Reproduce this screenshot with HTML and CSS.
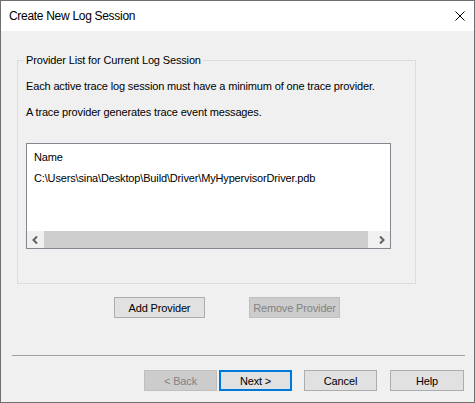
FILE: index.html
```html
<!DOCTYPE html>
<html>
<head>
<meta charset="utf-8">
<title>Create New Log Session</title>
<link rel="stylesheet" href="styles.css">
</head>
<body>
<div class="window">
  <div class="titlebar">
    <span class="title">Create New Log Session</span>
    <svg class="close" width="10" height="10" viewBox="0 0 10 10"><path d="M0.5 0.5 L9.5 9.5 M9.5 0.5 L0.5 9.5" stroke="#000" stroke-width="1" fill="none"/></svg>
  </div>
  <div class="body">
    <fieldset class="group">
      <legend class="legend">Provider List for Current Log Session</legend>
      <p class="desc">Each active trace log session must have a minimum of one trace provider.</p>
      <p class="desc">A trace provider generates trace event messages.</p>
      <div class="listbox">
        <div class="list-items">
          <div class="item">Name</div>
          <div class="item">C:\Users\sina\Desktop\Build\Driver\MyHypervisorDriver.pdb</div>
        </div>
        <div class="hscroll">
          <div class="arrow"><svg width="7" height="8" viewBox="0 0 7 8"><path d="M5 0.5 L1.5 4 L5 7.5" stroke="#606060" stroke-width="2" fill="none"/></svg></div>
          <div class="thumb"></div>
          <div class="track"></div>
          <div class="arrow"><svg width="7" height="8" viewBox="0 0 7 8"><path d="M2 0.5 L5.5 4 L2 7.5" stroke="#606060" stroke-width="2" fill="none"/></svg></div>
        </div>
      </div>
    </fieldset>
    <div class="provider-buttons">
      <button class="btn btn-wide">Add Provider</button>
      <button class="btn btn-wide" disabled>Remove Provider</button>
    </div>
    <div class="separator"></div>
    <div class="wizard-buttons">
      <button class="btn btn-back" disabled>&lt; Back</button>
      <button class="btn btn-next">Next &gt;</button>
      <button class="btn btn-cancel">Cancel</button>
      <button class="btn btn-help">Help</button>
    </div>
  </div>
</div>
</body>
</html>
```
FILE: styles.css
```css
html, body {
  margin: 0;
  padding: 0;
  background: #f0f0f0;
}
.window {
  box-sizing: border-box;
  width: 475px;
  height: 403px;
  border: 1px solid #6f6f6f;
  background: #f0f0f0;
  display: flex;
  flex-direction: column;
  font-family: "Liberation Sans", Arial, sans-serif;
  font-size: 11px;
  letter-spacing: -0.15px;
  color: #000;
}
.titlebar {
  height: 30px;
  flex: none;
  background: #fff;
  display: flex;
  align-items: center;
  justify-content: space-between;
  padding: 0 9px 0 8px;
}
.title {
  font-size: 12px;
  letter-spacing: -0.3px;
  line-height: 16px;
}
.close {
  display: block;
}
.body {
  flex: 1;
  display: flex;
  flex-direction: column;
}
.group {
  margin: 21px 58px 0 16px;
  padding: 0 24px 34px 6px;
  border: 1px solid #dcdcdc;
  min-width: 0;
}
.legend {
  padding: 0 2px;
  line-height: 16px;
}
.desc {
  margin: 10px 0 0 2px;
  line-height: 16px;
  white-space: nowrap;
}
.listbox {
  box-sizing: border-box;
  margin: 23px 0 0 2px;
  width: 365px;
  height: 106px;
  border: 1px solid #828790;
  background: #fff;
  display: flex;
  flex-direction: column;
}
.list-items {
  flex: 1;
  padding: 5px 7px 0;
  display: flex;
  flex-direction: column;
  gap: 5px;
}
.item {
  line-height: 16px;
  white-space: nowrap;
}
.hscroll {
  height: 17px;
  flex: none;
  display: flex;
  background: #f0f0f0;
}
.arrow {
  width: 17px;
  display: flex;
  align-items: center;
  justify-content: center;
}
.thumb {
  width: 324px;
  background: #cdcdcd;
}
.track {
  flex: 1;
}
.provider-buttons {
  display: flex;
  gap: 44px;
  margin: 13px 0 0 113px;
}
.btn {
  box-sizing: border-box;
  height: 21px;
  padding: 0;
  margin: 0;
  border: 1px solid #adadad;
  background: #e1e1e1;
  font: inherit;
  letter-spacing: inherit;
  color: #000;
  line-height: 16px;
  text-align: center;
}
.btn:disabled {
  background: #cccccc;
  border-color: #bfbfbf;
  color: #838383;
}
.btn-wide {
  width: 91px;
}
.separator {
  height: 1px;
  background: #a0a0a0;
  margin: 37px 9px 0 11px;
}
.wizard-buttons {
  display: flex;
  justify-content: flex-end;
  margin: 14px 10px 0 0;
}
.btn-back, .btn-next, .btn-cancel {
  width: 73px;
}
.btn-help {
  width: 74px;
}
.btn-back {
  margin-right: 2px;
}
.btn-next {
  border: 2px solid #0078d7;
  margin-right: 12px;
}
.btn-cancel {
  margin-right: 13px;
}
```
